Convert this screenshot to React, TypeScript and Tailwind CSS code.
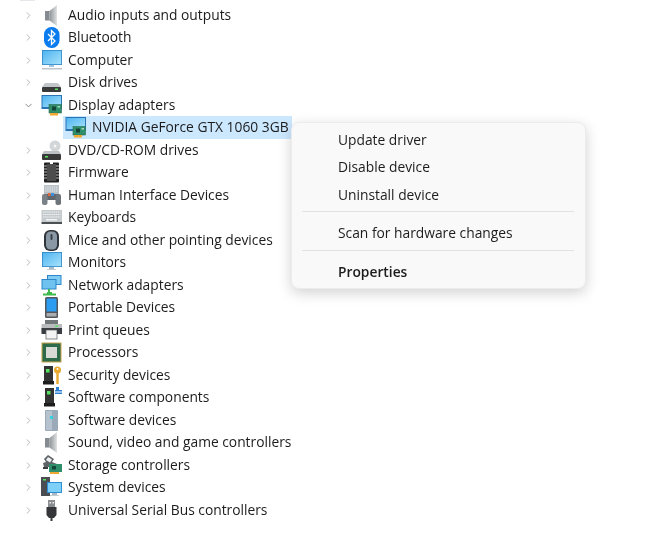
import { ChevronDown, ChevronRight } from "lucide-react";
import type { ReactNode } from "react";

const Monitor = ({ x = 1, y = 2, w = 19, h = 13 }: { x?: number; y?: number; w?: number; h?: number }) => (
  <>
    <defs>
      <linearGradient id="screen" x1="0" y1="0" x2="1" y2="1">
        <stop offset="0" stopColor="#4fb4f0" />
        <stop offset="1" stopColor="#a6e2fb" />
      </linearGradient>
    </defs>
    <rect x={x} y={y} width={w} height={h} fill="#2f86c8" />
    <rect x={x + 0.8} y={y + 0.8} width={w - 1.6} height={h - 1.6} fill="url(#screen)" />
  </>
);

const Card = () => (
  <>
    <rect x="8" y="9.500" width="12.500" height="8.500" fill="#2f8f6a" stroke="#2b6b55" strokeWidth="0.6" />
    <rect x="11" y="11.500" width="4" height="4" fill="#16463a" />
    <rect x="16.500" y="11" width="2.500" height="1.500" fill="#a8dcc0" />
    <rect x="9" y="18" width="8" height="2.500" fill="#f0a830" />
  </>
);

const Tower = ({ x = 3 }: { x?: number }) => (
  <>
    <path d={`M${x} 1h9v15h-9z`} fill="#333" />
    <rect x={x + 2} y="4" width="3.500" height="3.500" fill="#58e060" />
    <path d={`M${x - 1} 16h11v3.500h-11z`} fill="#1d1d1d" />
  </>
);

const Speaker = () => (
  <>
    <defs>
      <linearGradient id="cone" x1="0" y1="0" x2="1" y2="0">
        <stop offset="0" stopColor="#8f9497" />
        <stop offset="1" stopColor="#dfe1e3" />
      </linearGradient>
    </defs>
    <rect x="4" y="6" width="4.500" height="9.500" fill="#858b90" />
    <path d="M8.500 6 16 0v21l-7.500-5.500z" fill="url(#cone)" />
  </>
);

const icons: Record<string, ReactNode> = {
  audio: <Speaker />,
  bluetooth: (
    <>
      <rect x="3" y="0" width="15.500" height="21" rx="7.500" fill="#0a7cf0" />
      <path d="m7 7 7 7-3.500 3.500v-14L14 7l-7 7" fill="none" stroke="#fff" strokeWidth="1.300" />
    </>
  ),
  computer: (
    <>
      <Monitor y={0} h={15} w={20} />
      <rect x="8" y="15" width="5" height="2" fill="#9fc6de" />
      <rect x="1" y="18" width="20" height="1.500" fill="#bcc6cc" />
    </>
  ),
  disk: (
    <>
      <path d="M4 11h13l3 4H1z" fill="#c3c6c8" />
      <rect x="1" y="15" width="19" height="5" rx="1" fill="#3a3a3a" />
      <rect x="14" y="16.500" width="3" height="1.500" fill="#58e060" />
    </>
  ),
  display: (
    <>
      <rect x="0.500" y="0" width="20.500" height="14" fill="#2a74b4" />
      <rect x="1.500" y="1" width="18.500" height="11" fill="url(#adapter)" />
      <defs>
        <linearGradient id="adapter" x1="0" y1="0" x2="1" y2="1">
          <stop offset="0" stopColor="#4fb4f0" />
          <stop offset="1" stopColor="#a6e2fb" />
        </linearGradient>
      </defs>
      <Card />
    </>
  ),
  dvd: (
    <>
      <circle cx="14" cy="6" r="5.500" fill="#d3d6d8" />
      <circle cx="14" cy="6" r="1.500" fill="#f4f4f4" />
      <path d="M3 11h15l2 3H1z" fill="#bfc2c4" />
      <rect x="1" y="14" width="19" height="6" rx="1" fill="#3a3a3a" />
      <rect x="4" y="16" width="3" height="1.500" fill="#58e060" />
    </>
  ),
  firmware: (
    <>
      <rect x="3" y="0.500" width="15" height="20" rx="1" fill="#222" />
      <rect x="6" y="2" width="9" height="17" fill="#4c4c4c" />
      <path d="M3 4h3M3 7h3M3 10h3M3 13h3M3 16h3M15 4h3M15 7h3M15 10h3M15 13h3M15 16h3" stroke="#b5b5b5" />
      <rect x="9" y="0" width="3" height="2" fill="#fff" />
    </>
  ),
  hid: (
    <>
      <rect x="3" y="0" width="15" height="10" fill="#b9c0c6" />
      <path d="M4 2h13M4 4h13M4 6h13" stroke="#e4e8ea" strokeDasharray="1.500 .7" />
      <path d="M2 19 4 9h13l3 10h-3l-2-4H6l-2 4z" fill="#5f656b" />
      <rect x="7" y="8" width="2.500" height="3" fill="#e06a40" />
      <rect x="10" y="8" width="3" height="3" fill="#3a8fe0" />
      <rect x="14.500" y="9" width="5.500" height="11" rx="2" fill="#6d747a" />
      <rect x="1" y="9" width="5.500" height="11" rx="2" fill="#7a8288" />
    </>
  ),
  keyboard: (
    <>
      <rect x="0.500" y="3" width="20.500" height="12" fill="#c4c9cc" />
      <path d="M2 5h17.500M2 7.500h17.500M2 10h17.500" stroke="#f2f3f4" strokeDasharray="1.500 .6" />
      <rect x="5" y="12" width="11" height="1.500" fill="#f2f3f4" />
      <rect x="0.500" y="15" width="20.500" height="2" fill="#4c5053" />
    </>
  ),
  mouse: (
    <>
      <rect x="3" y="0" width="15" height="21" rx="6" fill="#2f343a" />
      <rect x="5" y="1.500" width="11" height="18" rx="4.500" fill="#8a98a6" />
      <rect x="9.500" y="4" width="2" height="6" rx="1" fill="#3b4148" />
    </>
  ),
  monitor: (
    <>
      <Monitor y={0} h={15} w={20} />
      <rect x="8" y="15" width="5" height="2" fill="#a8bac6" />
      <rect x="6" y="17" width="9" height="1" fill="#c4ccd2" />
    </>
  ),
  network: (
    <>
      <rect x="6" y="0" width="14.500" height="10" fill="#2f86c8" />
      <rect x="7" y="1" width="12.500" height="8" fill="#7fcdf5" />
      <rect x="0.500" y="4" width="15" height="10.500" fill="#2f86c8" />
      <rect x="1.500" y="5" width="13" height="8.500" fill="#6fc2f0" />
      <path d="M8 14v3M2 19.500h13" stroke="#3fba4c" strokeWidth="2" />
      <rect x="6" y="17" width="5" height="3" fill="#3fba4c" />
    </>
  ),
  portable: (
    <>
      <rect x="4" y="0" width="13" height="21" rx="1.500" fill="#53575b" />
      <rect x="5.500" y="1.500" width="10" height="13" fill="#2b9cf0" />
      <rect x="5.500" y="16" width="10" height="3.500" fill="#a9adb0" />
    </>
  ),
  print: (
    <>
      <rect x="4" y="0" width="13" height="4" fill="#70767a" />
      <path d="M0.500 4H21v8H0.500z" fill="#b9bdc0" />
      <rect x="14" y="5.500" width="3" height="1.500" fill="#58e060" />
      <rect x="0.500" y="8" width="20.500" height="6" fill="#3a3e42" />
      <rect x="5" y="10" width="11" height="9" fill="#f4f4f4" stroke="#55595c" strokeWidth="0.700" />
    </>
  ),
  processor: (
    <>
      <rect x="0.500" y="0.500" width="20" height="20" fill="#c9a24a" />
      <rect x="1.500" y="1.500" width="18" height="18" fill="#2d6a4a" />
      <rect x="5" y="5" width="11" height="11" fill="#d9d9d6" />
    </>
  ),
  security: (
    <>
      <Tower />
      <circle cx="16.500" cy="5" r="3.500" fill="#e8a92f" />
      <circle cx="16.500" cy="4" r="1" fill="#fff" />
      <path d="M16.500 8v11" stroke="#e8a92f" strokeWidth="2.400" />
    </>
  ),
  components: (
    <>
      <Tower x={4} />
      <path d="M15 0h3v3h3v4h-7V3h1z" fill="#2b7fd0" />
      <rect x="14" y="4.500" width="7" height="1" fill="#fff" />
    </>
  ),
  softdev: (
    <>
      <rect x="4" y="0" width="13" height="21" rx="1" fill="#9aaab8" />
      <rect x="5" y="1" width="6" height="19" fill="#b6c3cf" />
      <rect x="9" y="6" width="3" height="3" fill="#35d3e0" />
    </>
  ),
  sound: <Speaker />,
  storage: (
    <>
      <path d="m7 0 6 4-2 3 5 2-3 3H3l-1-4 3-1-2-3z" fill="#5d6367" />
      <path d="m7 2 4 2.500-2 3-4-2.500z" fill="#eef0f1" />
      <rect x="8" y="9" width="13" height="8" fill="#2f8f6a" />
      <rect x="11" y="11" width="4" height="3.500" fill="#16463a" />
      <rect x="9" y="17" width="9" height="2" fill="#f0a830" />
      <rect x="2" y="12" width="5" height="2" fill="#3a3e42" />
    </>
  ),
  system: (
    <>
      <rect x="0" y="0" width="9" height="19" fill="#4a4e52" />
      <rect x="2" y="2" width="3" height="1.500" fill="#58e060" />
      <rect x="6" y="5" width="15" height="11" fill="#2f8fd5" />
      <rect x="7" y="6" width="13" height="9" fill="#7fd0f8" />
      <rect x="11" y="16" width="5" height="2" fill="#a8bac6" />
      <rect x="9" y="18" width="9" height="1" fill="#c4ccd2" />
    </>
  ),
  usb: (
    <>
      <rect x="7" y="0" width="7" height="7" fill="#8a8e91" />
      <rect x="8.500" y="2" width="1.500" height="1.500" fill="#eee" />
      <rect x="11.500" y="2" width="1.500" height="1.500" fill="#eee" />
      <path d="M5.500 7h10v8l-2.500 3h-5l-2.500-3z" fill="#343639" />
      <rect x="9.500" y="18" width="2" height="3" fill="#343639" />
    </>
  ),
};

const Icon = ({ name, className }: { name: string; className: string }) => (
  <svg viewBox="0 0 21 21" width="21" height="21" className={className}>
    {icons[name]}
  </svg>
);

const devices = [
  { name: "audio", label: "Audio inputs and outputs" },
  { name: "bluetooth", label: "Bluetooth" },
  { name: "computer", label: "Computer" },
  { name: "disk", label: "Disk drives" },
  { name: "display", label: "Display adapters", open: true },
  { name: "dvd", label: "DVD/CD-ROM drives" },
  { name: "firmware", label: "Firmware" },
  { name: "hid", label: "Human Interface Devices" },
  { name: "keyboard", label: "Keyboards" },
  { name: "mouse", label: "Mice and other pointing devices" },
  { name: "monitor", label: "Monitors" },
  { name: "network", label: "Network adapters" },
  { name: "portable", label: "Portable Devices" },
  { name: "print", label: "Print queues" },
  { name: "processor", label: "Processors" },
  { name: "security", label: "Security devices" },
  { name: "components", label: "Software components" },
  { name: "softdev", label: "Software devices" },
  { name: "sound", label: "Sound, video and game controllers" },
  { name: "storage", label: "Storage controllers" },
  { name: "system", label: "System devices" },
  { name: "usb", label: "Universal Serial Bus controllers" },
];

export default function App() {
  return (
    <div className="relative h-[533px] w-[657px] overflow-hidden bg-white font-['Open_Sans',sans-serif] text-[13.800px] text-[#1c1c1c] blur-[0.3px]">
      <div className="ml-[20px] h-px w-[15px] bg-gray-200" />
      <ul className="pt-[2.750px]">
        {devices.map((d) => (
          <li key={d.label}>
            <div className="flex h-[22.500px] items-center pl-[23px]">
              {d.open ? (
                <ChevronDown size={11} strokeWidth={1.500} className="mr-[7px] text-[#555]" />
              ) : (
                <ChevronRight size={11} strokeWidth={1.500} className="mr-[7px] text-[#999]" />
              )}
              <Icon name={d.name} className="shrink-0" />
              <span className="ml-[6px] whitespace-nowrap">{d.label}</span>
            </div>
            {d.open && (
              <div className="ml-[63px] flex h-[22.500px] w-[229px] items-center bg-[#cce8ff] pl-[2px]">
                <Icon name="display" className="shrink-0" />
                <span className="ml-[6px] whitespace-nowrap">NVIDIA GeForce GTX 1060 3GB</span>
              </div>
            )}
          </li>
        ))}
      </ul>
      <div className="absolute left-[290.500px] top-[121.500px] h-[167px] w-[295px] rounded-lg border border-[#ececec] bg-[#f9f9f9] px-[10.500px] pt-[4px] shadow-[0_4px_14px_rgba(0,0,0,0.18)]">
        <div className="flex h-[27.500px] items-center pl-[36px]">Update driver</div>
        <div className="flex h-[27.500px] items-center pl-[36px]">Disable device</div>
        <div className="flex h-[27.500px] items-center pl-[36px]">Uninstall device</div>
        <div className="mt-[1.750px] h-px bg-[#e2e2e2]" />
        <div className="flex h-[38px] items-center pl-[36px] pt-[5px]">Scan for hardware changes</div>
        <div className="h-px bg-[#e2e2e2]" />
        <div className="flex h-[36px] items-center pl-[36px] pt-[7px] font-semibold">Properties</div>
      </div>
    </div>
  );
}
